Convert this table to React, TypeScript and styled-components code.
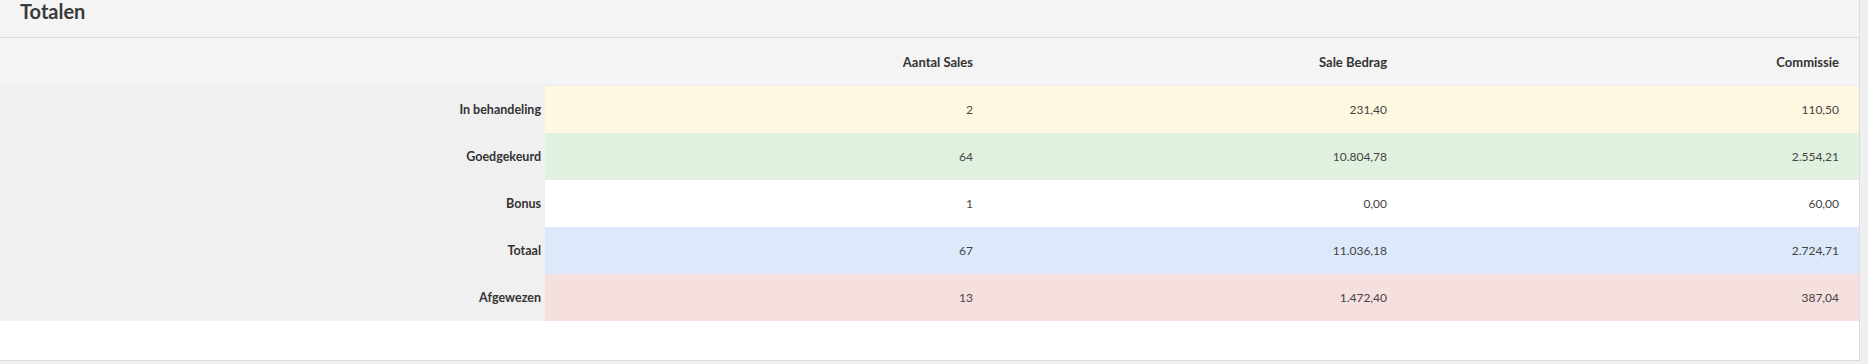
import React from "react";
import styled, { createGlobalStyle } from "styled-components";

const Global = createGlobalStyle`
  html, body { margin: 0; padding: 0; background: #f0f0f0; }
  body { font-family: Lato, "Open Sans", sans-serif; color: #333; }
`;

const Page = styled.div`
  width: 1868px;
  height: 364px;
  overflow: hidden;
  background: #f0f0f0;
`;

const Panel = styled.section`
  width: 1859px;
  background: #fff;
  border-right: 1px solid #dcdcdc;
  border-bottom: 1px solid #dcdcdc;
`;

const PanelHead = styled.header`
  box-sizing: border-box;
  height: 38px;
  background: #f4f4f4;
  border-bottom: 1px solid #dcdcdc;
  padding: 1px 0 0 20px;
`;

const Title = styled.h2`
  margin: 0;
  font-size: 20px;
  line-height: 20px;
  font-weight: 700;
  color: #3a3a3a;
`;

const Grid = styled.div`
  display: grid;
  grid-template-columns: 545px 448px 414px 1fr;
`;

const HeadCell = styled.div`
  height: 47px;
  background: #f4f4f4;
  border-bottom: 1px solid #ececec;
  display: flex;
  align-items: center;
  justify-content: flex-end;
  padding-right: 20px;
  font-size: 13px;
  font-weight: 700;
  color: #333;
`;

const LabelCell = styled.div`
  height: 47px;
  background: #f0f0f0;
  display: flex;
  align-items: center;
  justify-content: flex-end;
  padding-right: 4px;
  font-size: 12.5px;
  font-weight: 700;
  color: #333;
`;

const ValueCell = styled.div<{ $bg: string }>`
  height: 47px;
  background: ${(p) => p.$bg};
  display: flex;
  align-items: center;
  justify-content: flex-end;
  padding-right: 20px;
  font-size: 12px;
  color: #444;
`;

const Footer = styled.div`
  height: 39px;
  background: #fff;
`;

const rows = [
  { label: "In behandeling", bg: "#fef8e0", v: ["2", "231,40", "110,50"] },
  { label: "Goedgekeurd", bg: "#e0f1df", v: ["64", "10.804,78", "2.554,21"] },
  { label: "Bonus", bg: "#ffffff", v: ["1", "0,00", "60,00"] },
  { label: "Totaal", bg: "#dce9fa", v: ["67", "11.036,18", "2.724,71"] },
  { label: "Afgewezen", bg: "#f6dfdf", v: ["13", "1.472,40", "387,04"] },
];

export default function App() {
  return (
    <Page>
      <Global />
      <Panel>
        <PanelHead>
          <Title>Totalen</Title>
        </PanelHead>
        <Grid>
          <HeadCell />
          <HeadCell>Aantal Sales</HeadCell>
          <HeadCell>Sale Bedrag</HeadCell>
          <HeadCell>Commissie</HeadCell>
          {rows.map((r) => (
            <React.Fragment key={r.label}>
              <LabelCell>{r.label}</LabelCell>
              {r.v.map((val, i) => (
                <ValueCell key={i} $bg={r.bg}>
                  {val}
                </ValueCell>
              ))}
            </React.Fragment>
          ))}
        </Grid>
        <Footer />
      </Panel>
    </Page>
  );
}
